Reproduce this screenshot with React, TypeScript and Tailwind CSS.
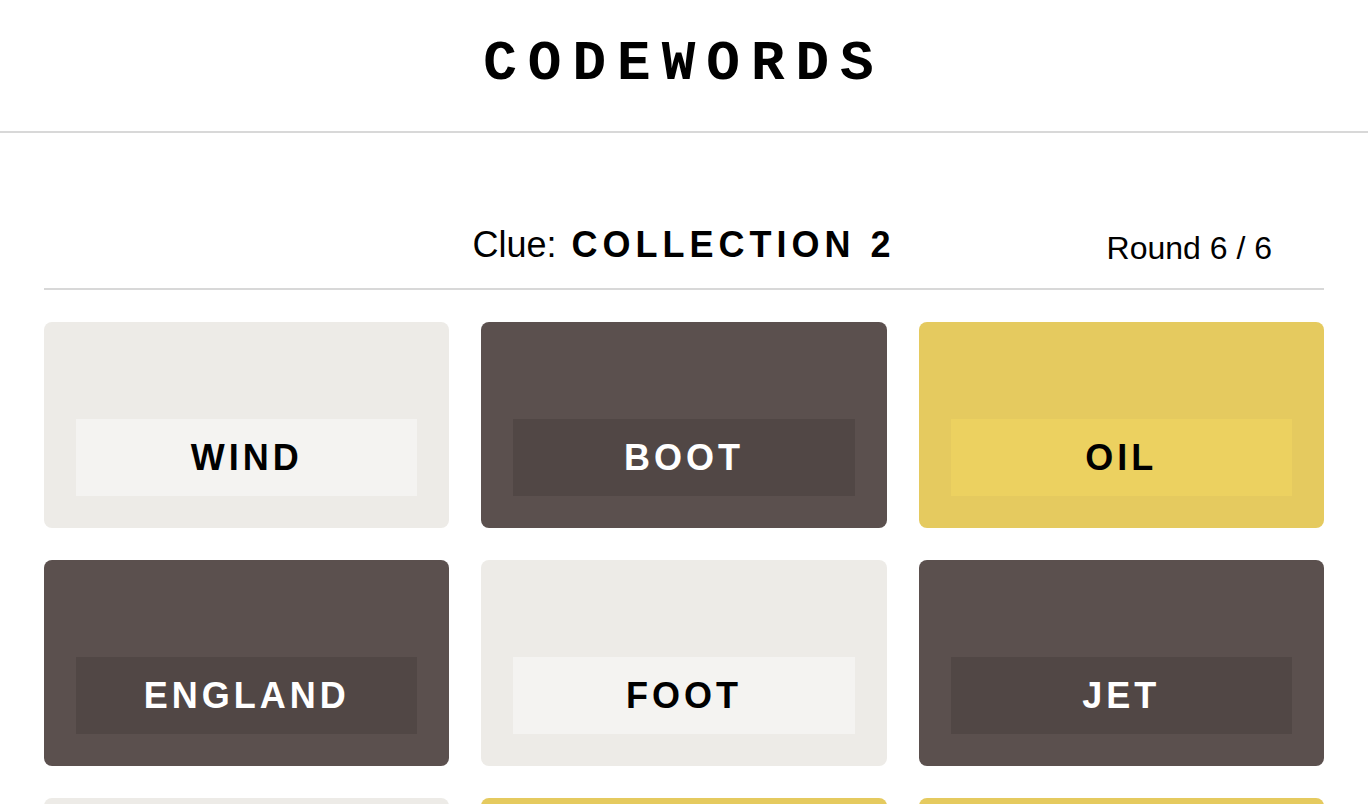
import React from "react";

type Tone = "light" | "dark" | "yellow";

const cards: { word: string; tone: Tone }[] = [
  { word: "WIND", tone: "light" },
  { word: "BOOT", tone: "dark" },
  { word: "OIL", tone: "yellow" },
  { word: "ENGLAND", tone: "dark" },
  { word: "FOOT", tone: "light" },
  { word: "JET", tone: "dark" },
  { word: "BANK", tone: "light" },
  { word: "STAMP", tone: "yellow" },
  { word: "COIN", tone: "yellow" },
];

const cardBg: Record<Tone, string> = {
  light: "bg-[#edebe7]",
  dark: "bg-[#5b504e]",
  yellow: "bg-[#e5ca5f]",
};

const labelBg: Record<Tone, string> = {
  light: "bg-[#f4f3f1] text-black",
  dark: "bg-[#514745] text-white",
  yellow: "bg-[#ecd160] text-black",
};

function Card({ word, tone }: { word: string; tone: Tone }) {
  return (
    <div className={`h-[206px] rounded-lg p-8 flex flex-col justify-end ${cardBg[tone]}`}>
      <div
        className={`h-[77px] flex items-center justify-center font-bold text-[36px] leading-none tracking-[4px] ${labelBg[tone]}`}
      >
        {word}
      </div>
    </div>
  );
}

export default function App() {
  return (
    <div className="min-h-screen bg-white text-black font-['Liberation_Sans',Arial,sans-serif]">
      <header className="h-[133px] border-b-2 border-[#d8d8d8] flex justify-center">
        <h1 className="mt-[36px] h-[56px] font-['Liberation_Mono','Courier_New',monospace] font-bold text-[56px] leading-none tracking-[11px]">
          CODEWORDS
        </h1>
      </header>
      <main className="max-w-[1280px] mx-auto pt-[85px] pb-16">
        <div className="grid grid-cols-[1fr_auto_1fr] items-end pb-4 border-b-2 border-[#d8d8d8]">
          <div />
          <div className="text-[36px]">
            Clue:{" "}
            <span className="ml-[5px] font-bold tracking-[5px]">COLLECTION 2</span>
          </div>
          <div className="flex justify-end pr-[52px] text-[32px]">Round 6 / 6</div>
        </div>
        <div className="mt-8 grid grid-cols-3 gap-8">
          {cards.map((c) => (
            <Card key={c.word} word={c.word} tone={c.tone} />
          ))}
        </div>
      </main>
    </div>
  );
}
